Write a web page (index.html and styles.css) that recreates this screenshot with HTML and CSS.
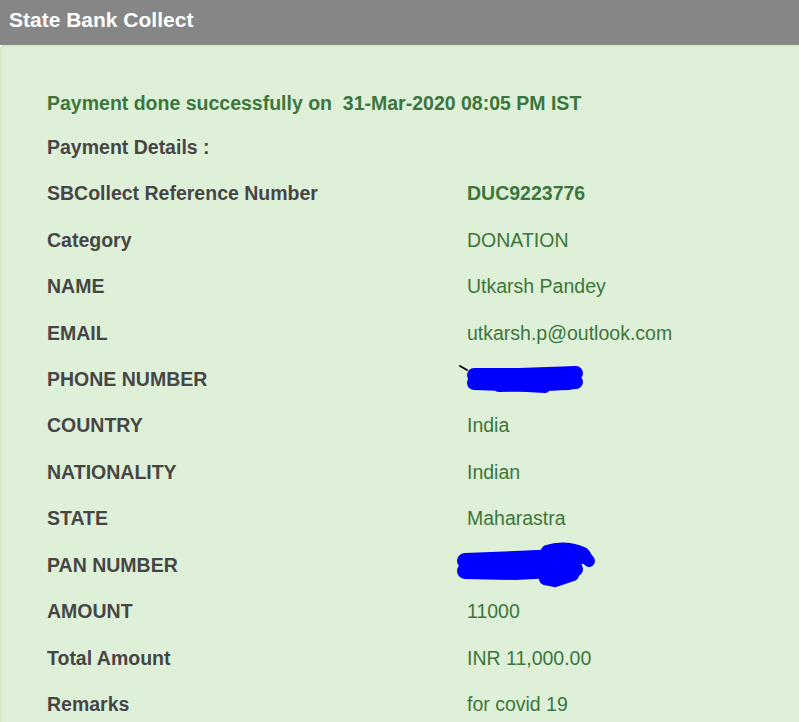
FILE: index.html
```html
<!DOCTYPE html>
<html>
<head>
<meta charset="utf-8">
<link rel="stylesheet" href="styles.css">
</head>
<body>
<div class="header">State Bank Collect</div>
<div class="panel">
  <div class="grid">
    <div class="success">Payment done successfully on&nbsp; 31-Mar-2020 08:05 PM IST</div>
    <div class="heading">Payment Details :</div>
    <div class="label">SBCollect Reference Number</div><div class="value strong">DUC9223776</div>
    <div class="label">Category</div><div class="value">DONATION</div>
    <div class="label">NAME</div><div class="value">Utkarsh Pandey</div>
    <div class="label">EMAIL</div><div class="value">utkarsh.p@outlook.com</div>
    <div class="label">PHONE NUMBER</div>
    <div class="value redacted">
      <svg class="scribble phone" width="130" height="34" viewBox="0 0 130 34">
        <line x1="1" y1="2" x2="8" y2="6" stroke="#111" stroke-width="2" stroke-linecap="round"/>
        <path d="M15 11 L60 11 L117 9" stroke="#0000ff" stroke-width="14" stroke-linecap="round" fill="none"/>
        <path d="M15 19 L70 21 L117 18" stroke="#0000ff" stroke-width="14" stroke-linecap="round" fill="none"/>
        <path d="M40 21 L110 19" stroke="#0000ff" stroke-width="14" stroke-linecap="round" fill="none"/>
        <path d="M68 23 L86 24" stroke="#0000ff" stroke-width="10" stroke-linecap="round" fill="none"/>
      </svg>
    </div>
    <div class="label">COUNTRY</div><div class="value">India</div>
    <div class="label">NATIONALITY</div><div class="value">Indian</div>
    <div class="label">STATE</div><div class="value">Maharastra</div>
    <div class="label">PAN NUMBER</div>
    <div class="value redacted">
      <svg class="scribble pan" width="145" height="52" viewBox="0 0 145 52">
        <path d="M10 22 L60 20 L128 17" stroke="#0000ff" stroke-width="16" stroke-linecap="round" fill="none"/>
        <path d="M10 32 L60 33 L120 30" stroke="#0000ff" stroke-width="16" stroke-linecap="round" fill="none"/>
        <path d="M92 12 Q110 6 128 14 L134 22" stroke="#0000ff" stroke-width="12" stroke-linecap="round" fill="none"/>
        <path d="M90 40 L100 42 L118 36" stroke="#0000ff" stroke-width="12" stroke-linecap="round" fill="none"/>
      </svg>
    </div>
    <div class="label">AMOUNT</div><div class="value">11000</div>
    <div class="label">Total Amount</div><div class="value">INR 11,000.00</div>
    <div class="label">Remarks</div><div class="value">for covid 19</div>
  </div>
</div>
</body>
</html>
```
FILE: styles.css
```css
html, body {
  margin: 0;
  padding: 0;
  overflow: hidden;
  background: #ffffff;
}
body {
  font-family: "Liberation Sans", Arial, sans-serif;
}
.header {
  height: 45px;
  box-sizing: border-box;
  background: #868686;
  color: #ffffff;
  font-weight: bold;
  font-size: 21px;
  line-height: 24px;
  padding: 7.5px 0 0 9px;
}
.panel {
  background: #dff0d8;
  border: 2px solid #d6e9c6;
  border-top-left-radius: 4px;
  margin-right: -12px;
  padding: 35.7px 0 10px 45px;
}
.grid {
  display: grid;
  grid-template-columns: 420px 1fr;
  font-size: 19.5px;
  line-height: 46.45px;
}
.success {
  grid-column: 1 / span 2;
  line-height: 41px;
  font-weight: bold;
  color: #3c763d;
  white-space: nowrap;
}
.heading {
  grid-column: 1 / span 2;
  font-weight: bold;
  color: #464646;
}
.label {
  font-weight: bold;
  color: #464646;
  white-space: nowrap;
}
.value {
  color: #3c763d;
  white-space: nowrap;
}
.value.strong {
  font-weight: bold;
}
.redacted {
  position: relative;
  height: 46.45px;
}
.scribble {
  position: absolute;
  display: block;
}
.scribble.phone {
  left: -8px;
  top: 8px;
}
.scribble.pan {
  left: -12px;
  top: -3px;
}
```
